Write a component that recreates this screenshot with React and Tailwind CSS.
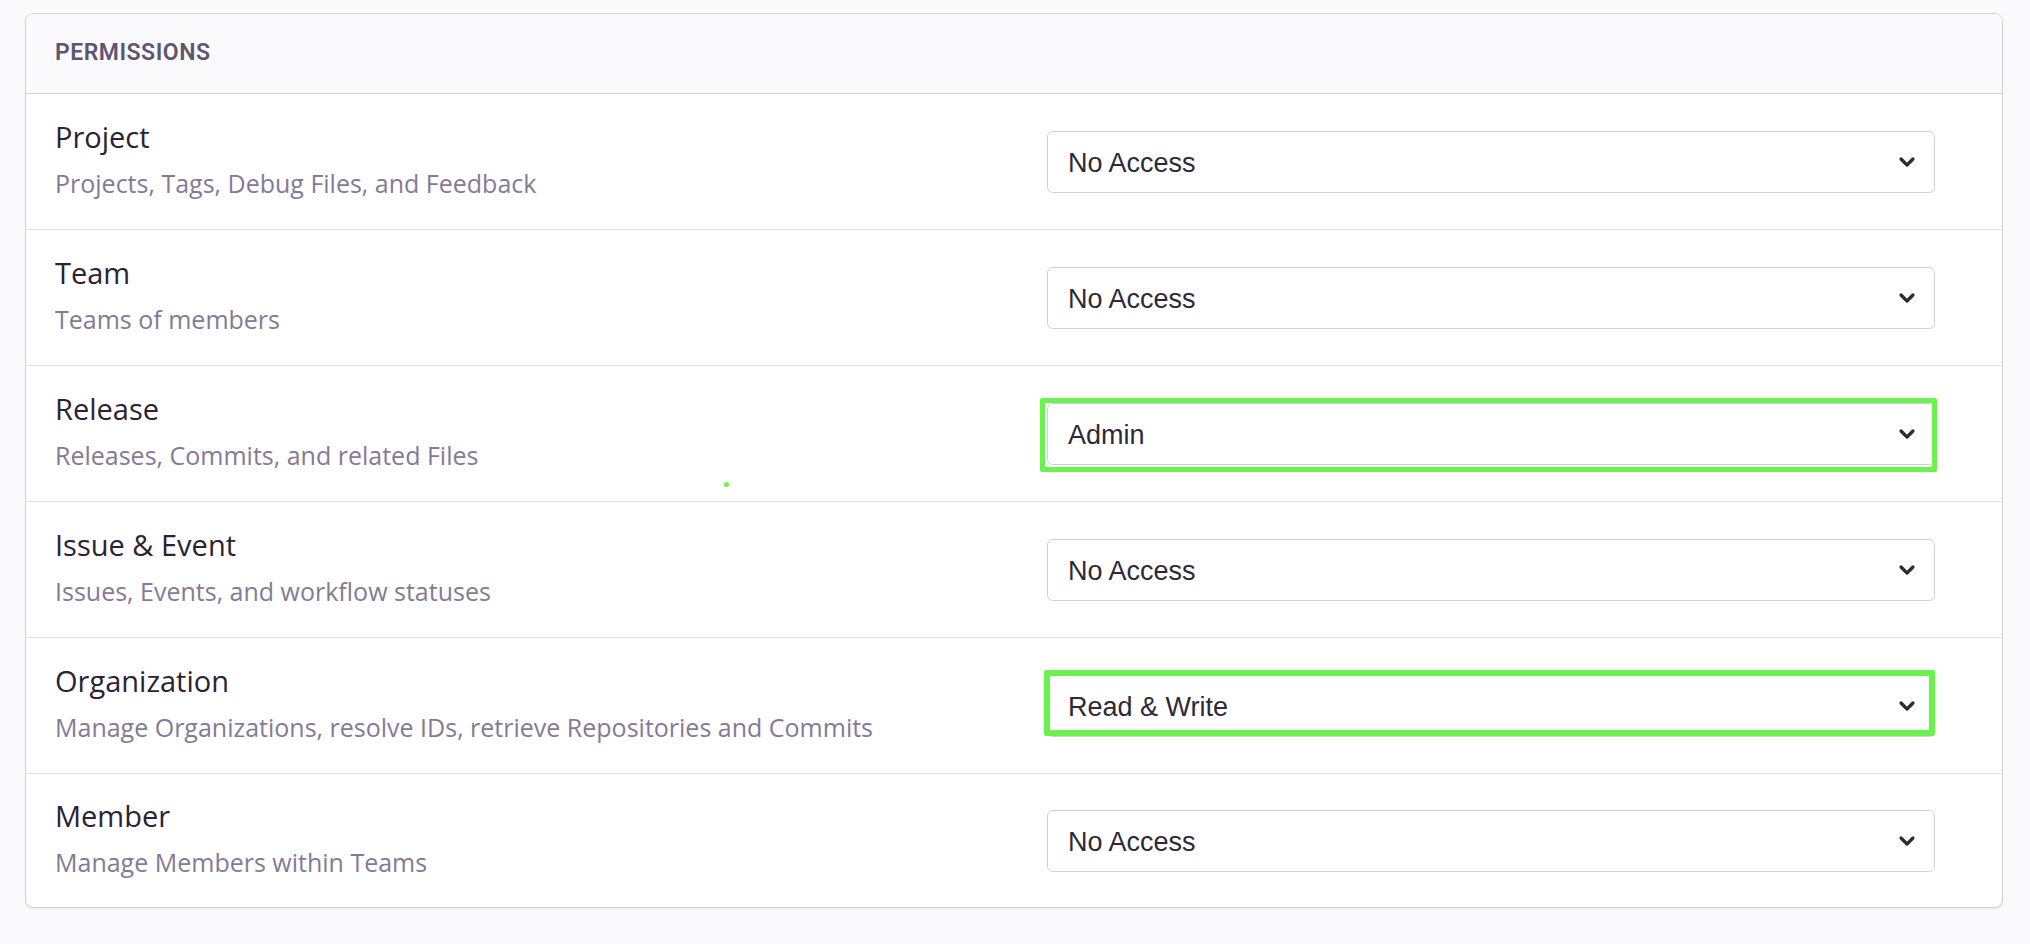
import { ChevronDown } from "lucide-react";

const rows = [
  { label: "Project", help: "Projects, Tags, Debug Files, and Feedback", value: "No Access" },
  { label: "Team", help: "Teams of members", value: "No Access" },
  { label: "Release", help: "Releases, Commits, and related Files", value: "Admin", mark: "release" },
  { label: "Issue & Event", help: "Issues, Events, and workflow statuses", value: "No Access" },
  { label: "Organization", help: "Manage Organizations, resolve IDs, retrieve Repositories and Commits", value: "Read & Write", mark: "org" },
  { label: "Member", help: "Manage Members within Teams", value: "No Access" },
];

function Select({ value, mark }) {
  return (
    <div className="relative w-[888px] h-[62px]">
      <div className="h-full flex items-center justify-between pl-[20px] pr-[15px] bg-white border border-[#d4cedb] rounded-[6px]">
        <span className="mt-[4px] text-[27px] text-[#2f2936]" style={{ fontFamily: '"Liberation Sans", Arial, sans-serif' }}>
          {value}
        </span>
        <ChevronDown size={24} strokeWidth={3.2} className="text-[#2f2936]" />
      </div>
      {mark === "release" && (
        <div className="absolute -left-[7px] -right-[2px] -top-[5px] -bottom-[7px] border-[5px] border-[#6cf24f] rounded-[2px] pointer-events-none" />
      )}
      {mark === "org" && (
        <div className="absolute -left-[3px] right-0 -top-[5px] bottom-[1px] border-[6px] border-[#6cf24f] rounded-[2px] pointer-events-none" />
      )}
    </div>
  );
}

export default function App() {
  return (
    <div className="min-h-screen bg-[#fafafc] pt-[13px] pl-[25px] pr-[27px]" style={{ fontFamily: "Roboto, Inter, sans-serif" }}>
      <div className="relative bg-white border border-[#d4cedb] rounded-[8px] shadow-[0_2px_0_rgba(37,11,54,0.05)] overflow-hidden">
        <div className="h-[80px] bg-[#fafafc] border-b border-[#d4cedb] flex items-center pl-[29px]">
          <h2 className="text-[23px] font-semibold uppercase text-[#5e5670] tracking-[0.5px]">Permissions</h2>
        </div>
        {rows.map((r, i) => (
          <div
            key={r.label}
            className={`flex items-center justify-between pl-[29px] pr-[67px] ${i < rows.length - 1 ? "h-[136px] border-b border-[#e2dee7]" : "h-[133px]"}`}
          >
            <div className="mb-[5px]" style={{ fontFamily: '"Open Sans", Roboto, sans-serif' }}>
              <div className="text-[29px] leading-[36px] text-[#2b2233]">{r.label}</div>
              <div className="mt-[12px] text-[25px] leading-[32px] text-[#857a96]">{r.help}</div>
            </div>
            <Select value={r.value} mark={r.mark} />
          </div>
        ))}
        <div className="absolute left-[698px] top-[468px] w-[5px] h-[5px] rounded-full bg-[#6cf24f]" />
      </div>
    </div>
  );
}
